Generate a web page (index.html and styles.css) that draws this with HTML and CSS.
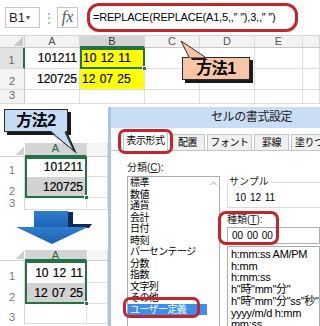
FILE: index.html
```html
<!DOCTYPE html>
<html lang="ja">
<head>
    <meta charset="UTF-8">
    <meta name="viewport" content="width=device-width, initial-scale=1.0">
    <title>REPLACE関数で数字に空白を入れる</title>
    <link rel="stylesheet" href="styles.css">
</head>
<body>
<div class="page">

    <!-- formula bar -->
    <div class="formula-bar">
        <div class="namebox">B1<span class="caret">▾</span></div>
        <div class="dots">⋮</div>
        <div class="fx">fx</div>
        <div class="formula">=REPLACE(REPLACE(A1,5,,&#8243; &#8243;),3,,&#8243; &#8243;)</div>
    </div>

    <!-- sheet -->
    <div class="sheet">
        <div class="corner"></div>
        <div class="colhead">A</div>
        <div class="colhead active">B</div>
        <div class="colhead">C</div>
        <div class="colhead">D</div>
        <div class="colhead">E</div>
        <div class="colhead"></div>

        <div class="rowhead active">1</div>
        <div class="cell num">101211</div>
        <div class="cell yellow sel">10 12 11</div>
        <div class="cell"></div>
        <div class="cell"></div>
        <div class="cell"></div>
        <div class="cell"></div>

        <div class="rowhead">2</div>
        <div class="cell num">120725</div>
        <div class="cell yellow">12 07 25</div>
        <div class="cell"></div>
        <div class="cell"></div>
        <div class="cell"></div>
        <div class="cell"></div>

        <div class="rowhead">3</div>
        <div class="cell"></div>
        <div class="cell"></div>
        <div class="cell"></div>
        <div class="cell"></div>
        <div class="cell"></div>
        <div class="cell"></div>
    </div>

    <!-- callout for method 1 -->
    <div class="callout callout-peach">
        方法1
        <svg class="tail tail-up" width="32" height="22" viewBox="0 0 32 22">
            <polygon points="5,5 13,21 29,21" fill="#1a1a1a"/>
            <polygon points="2,2 10,18.5 26,18.5" fill="#f8c6a4"/>
            <polyline points="10,18 2,2 26,18" fill="none" stroke="#2a2a2a" stroke-width="1"/>
        </svg>
    </div>

    <div class="lower">
        <div class="left-col">
            <div class="callout callout-blue">
                方法2
                <svg class="tail tail-down" width="36" height="26" viewBox="0 0 36 26">
                    <polygon points="9,3 23,3 32,23" fill="#1a1a1a"/>
                    <polygon points="6,0 20,0 29,20" fill="#c5ddf2"/>
                    <polyline points="6,1.5 29,20 20,1.5" fill="none" stroke="#2a2a2a" stroke-width="1"/>
                </svg>
            </div>

            <div class="mini mini-before">
                <div class="m-corner"></div>
                <div class="m-colhead active">A</div>
                <div class="m-colhead"></div>

                <div class="m-rowhead">1</div>
                <div class="m-cell num sel-top">101211</div>
                <div class="m-cell"></div>

                <div class="m-rowhead">2</div>
                <div class="m-cell num grey sel-bottom">120725</div>
                <div class="m-cell"></div>

                <div class="m-rowhead">3</div>
                <div class="m-cell"></div>
                <div class="m-cell"></div>
            </div>

            <svg class="arrow" width="80" height="34" viewBox="0 0 80 34">
                <defs>
                    <linearGradient id="arrowBlue" x1="0" y1="0" x2="0" y2="1">
                        <stop offset="0" stop-color="#2d7fd0"/>
                        <stop offset="1" stop-color="#1c5fae"/>
                    </linearGradient>
                </defs>
                <polygon points="56,1 61,1 61,13 80,13 77,17 56,17" fill="#0c2a55"/>
                <rect x="22" y="0" width="34" height="18" fill="url(#arrowBlue)"/>
                <polygon points="4,16 76,16 40,33" fill="url(#arrowBlue)"/>
            </svg>

            <div class="mini mini-after">
                <div class="m-corner"></div>
                <div class="m-colhead active">A</div>
                <div class="m-colhead"></div>

                <div class="m-rowhead">1</div>
                <div class="m-cell num sel-top">10 12 11</div>
                <div class="m-cell"></div>

                <div class="m-rowhead">2</div>
                <div class="m-cell num grey sel-bottom">12 07 25</div>
                <div class="m-cell"></div>

                <div class="m-rowhead">3</div>
                <div class="m-cell"></div>
                <div class="m-cell"></div>
            </div>
        </div>

        <!-- format cells dialog -->
        <div class="dialog">
            <div class="dlg-title">セルの書式設定</div>
            <div class="tabs">
                <div class="tab current ringed">表示形式</div>
                <div class="tab">配置</div>
                <div class="tab">フォント</div>
                <div class="tab">罫線</div>
                <div class="tab">塗りつぶし</div>
            </div>
            <div class="dlg-body">
                <div class="cat-col">
                    <div class="label">分類(<u>C</u>):</div>
                    <div class="listbox">
                        <ul class="cat-list">
                            <li>標準</li>
                            <li>数値</li>
                            <li>通貨</li>
                            <li>会計</li>
                            <li>日付</li>
                            <li>時刻</li>
                            <li>パーセンテージ</li>
                            <li>分数</li>
                            <li>指数</li>
                            <li>文字列</li>
                            <li>その他</li>
                            <li class="picked">ユーザー定義</li>
                        </ul>
                        <div class="scrollbar">
                            <svg width="7" height="5" viewBox="0 0 7 5"><polyline points="0.5,4 3.5,1 6.5,4" fill="none" stroke="#9a9a9a" stroke-width="1"/></svg>
                        </div>
                    </div>
                </div>
                <div class="type-col">
                    <fieldset class="sample">
                        <legend>サンプル</legend>
                        <div class="sample-value">10 12 11</div>
                    </fieldset>
                    <div class="type-field">
                        <div class="label">種類(<u>T</u>):</div>
                        <div class="type-input">00 00 00</div>
                    </div>
                    <ul class="format-list">
                        <li>h:mm:ss AM/PM</li>
                        <li>h:mm</li>
                        <li>h:mm:ss</li>
                        <li>h"時"mm"分"</li>
                        <li>h"時"mm"分"ss"秒"</li>
                        <li>yyyy/m/d h:mm</li>
                        <li>mm:ss</li>
                    </ul>
                </div>
            </div>
        </div>
    </div>

</div>
</body>
</html>
```

FILE: styles.css
```css
:root {
    --excel-green: #217346;
    --ring-red: #c4252c;
    --grid-line: #dedede;
    --head-bg: #f3f3f3;
    --head-active: #d4d4d4;
    --list-border: #abadb3;
}

*, *::before, *::after {
    box-sizing: border-box;
    margin: 0;
    padding: 0;
}

body {
    font-family: "Liberation Sans", "Noto Sans CJK JP", sans-serif;
    color: #000;
    background: #fff;
}

.page {
    position: relative;
    width: 320px;
    height: 326px;
    overflow: hidden;
}

/* formula bar */
.formula-bar {
    display: flex;
    align-items: center;
    height: 36px;
    border-bottom: 1px solid #d4d4d4;
}

.namebox {
    margin-left: 5px;
    width: 35px;
    height: 21px;
    border: 1px solid #c6c6c6;
    padding-left: 3px;
    font-size: 13px;
    line-height: 19px;
    color: #222;
}

.namebox .caret {
    font-size: 8px;
    color: #555;
    margin-left: 1px;
    vertical-align: 2px;
}

.dots {
    width: 17px;
    text-align: center;
    font-size: 12px;
    color: #9a9a9a;
}

.fx {
    width: 21px;
    height: 21px;
    border: 1px solid #c6c6c6;
    text-align: center;
    font-family: "Liberation Serif", serif;
    font-style: italic;
    font-size: 16px;
    line-height: 17px;
    color: #555;
}

.formula {
    margin-left: 9px;
    width: 211px;
    height: 29px;
    border: 3px solid var(--ring-red);
    border-radius: 12px;
    padding-left: 3px;
    font-size: 11px;
    line-height: 23px;
    letter-spacing: -0.2px;
    white-space: nowrap;
}

/* worksheet */
.sheet {
    display: grid;
    grid-template-columns: 25px 55px 65px 55px 55px 48px 1fr;
    grid-template-rows: 12px 21px 21px 14px;
}

.corner {
    background: var(--head-bg) linear-gradient(to top left, #cacaca 50%, transparent 50%) no-repeat right 1px bottom 1px / 9px 9px;
    border-right: 1px solid #d0d0d0;
    border-bottom: 1px solid #c8c8c8;
}

.colhead {
    background: var(--head-bg);
    border-right: 1px solid #d9d9d9;
    border-bottom: 1px solid #c8c8c8;
    text-align: center;
    font-size: 11px;
    line-height: 11px;
    color: #555;
}

.colhead.active {
    background: var(--head-active);
    border-bottom: 2px solid var(--excel-green);
    color: #333;
}

.rowhead {
    display: flex;
    align-items: flex-end;
    justify-content: center;
    padding-bottom: 2px;
    background: var(--head-bg);
    border-right: 1px solid #c8c8c8;
    border-bottom: 1px solid #dadada;
    font-size: 11px;
    color: #666;
    overflow: hidden;
}

.rowhead.active {
    background: #e2e2e2;
    border-right: 2px solid var(--excel-green);
}

.cell {
    display: flex;
    align-items: flex-end;
    padding: 0 2px 3px;
    border-right: 1px solid var(--grid-line);
    border-bottom: 1px solid var(--grid-line);
    font-size: 12px;
    line-height: 14px;
    word-spacing: 1px;
    white-space: nowrap;
    -webkit-text-stroke: 0.2px #000;
}

.cell.num {
    justify-content: flex-end;
}

.cell.yellow {
    background: #ffff00;
}

.cell.sel {
    position: relative;
    border: 2px solid var(--excel-green);
    padding: 0 1px 2px;
}

.cell.sel::after {
    content: "";
    position: absolute;
    right: -4px;
    bottom: -4px;
    width: 5px;
    height: 5px;
    background: var(--excel-green);
    border: 1px solid #fff;
}

/* callouts */
.callout {
    position: relative;
    height: 23px;
    border: 1px solid #2a2a2a;
    box-shadow: 3px 3px 0 #1a1a1a;
    font-weight: bold;
    font-size: 16px;
    line-height: 21px;
    text-align: center;
    letter-spacing: -0.5px;
    white-space: nowrap;
}

.callout-peach {
    position: absolute;
    left: 182px;
    top: 57px;
    width: 68px;
    background: #f8c6a4;
}

.callout-blue {
    margin: 5px 0 0 4px;
    width: 64px;
    background: #c5ddf2;
}

.tail {
    position: absolute;
    overflow: visible;
}

.tail-up {
    left: -4px;
    top: -19px;
}

.tail-down {
    left: 40px;
    top: 21px;
}

/* lower area */
.lower {
    display: flex;
}

.left-col {
    width: 108px;
    flex-shrink: 0;
}

/* small sheet snapshots */
.mini {
    display: grid;
    grid-template-columns: 25px 62px 1fr;
}

.mini-before {
    margin-top: 11px;
    grid-template-rows: 14px 20px 21px 12px;
}

.mini-after {
    margin-top: 5px;
    grid-template-rows: 11px 22px 21px 20px;
}

.m-corner {
    background: #fff linear-gradient(to top left, #d0d0d0 50%, transparent 50%) no-repeat right 1px bottom 1px / 8px 8px;
    border-bottom: 1px solid #d0d0d0;
}

.m-colhead {
    background: #f6f6f6;
    border-right: 1px solid #dcdcdc;
    border-bottom: 1px solid #d0d0d0;
    text-align: center;
    font-size: 11px;
    line-height: 11px;
    color: #555;
}

.m-colhead.active {
    background: var(--head-active);
    border-bottom: 2px solid var(--excel-green);
    color: #2f5f46;
}

.mini-after .m-colhead {
    line-height: 10px;
}

.m-rowhead {
    display: flex;
    align-items: flex-end;
    justify-content: center;
    padding-bottom: 1px;
    border-right: 1px solid #d6d6d6;
    font-size: 11px;
    color: #777;
    overflow: hidden;
}

.m-cell {
    display: flex;
    align-items: flex-end;
    padding: 0 3px 3px;
    border-right: 1px solid var(--grid-line);
    border-bottom: 1px solid var(--grid-line);
    font-size: 12px;
    line-height: 14px;
    word-spacing: 1px;
    white-space: nowrap;
    -webkit-text-stroke: 0.2px #000;
}

.m-cell.num {
    justify-content: flex-end;
}

.m-cell.grey {
    background: #d2d2d2;
}

.m-cell.sel-top {
    border: 2px solid var(--excel-green);
    border-bottom: none;
    padding: 0 2px 3px;
}

.m-cell.sel-bottom {
    position: relative;
    border: 2px solid var(--excel-green);
    border-top: none;
    padding: 0 2px 2px;
}

.m-cell.sel-bottom::after {
    content: "";
    position: absolute;
    right: -4px;
    bottom: -4px;
    width: 5px;
    height: 5px;
    background: var(--excel-green);
    border: 1px solid #fff;
}

.arrow {
    display: block;
    margin: 1px 0 0 12px;
}

/* format cells dialog */
.dialog {
    flex: 1;
    margin-top: 3px;
    height: 222px;
    border-left: 3px solid #aac6e6;
    background: #fff;
    overflow: hidden;
}

.dlg-title {
    height: 21px;
    padding-left: 100px;
    background: #c9def4;
    font-size: 12px;
    line-height: 20px;
    letter-spacing: -0.4px;
    color: #222;
    white-space: nowrap;
}

.tabs {
    display: flex;
    align-items: flex-end;
    height: 23px;
    padding-left: 12px;
    border-bottom: 1px solid #c5c5c5;
}

.tab {
    flex-shrink: 0;
    width: 35px;
    height: 16px;
    margin-right: 2px;
    background: #f0f0f0;
    border: 1px solid #c5c5c5;
    border-bottom: none;
    text-align: center;
    font-size: 10px;
    line-height: 15px;
    letter-spacing: -0.4px;
    white-space: nowrap;
    overflow: hidden;
}

.tab:nth-child(1),
.tab:nth-child(3) {
    width: 45px;
}

.tab:nth-child(5) {
    width: 42px;
    text-align: left;
    padding-left: 3px;
}

.tab.current {
    height: 20px;
    margin-bottom: -1px;
    background: #fff;
    line-height: 18px;
    overflow: visible;
}

.ringed {
    position: relative;
}

.ringed::after {
    content: "";
    position: absolute;
    left: -6px;
    right: -6px;
    top: -3px;
    bottom: -3px;
    border: 3px solid var(--ring-red);
    border-radius: 7px;
}

.dlg-body {
    display: flex;
    gap: 7px;
    padding-left: 16px;
}

.label {
    font-size: 10px;
    line-height: 12px;
    color: #222;
    white-space: nowrap;
}

.cat-col {
    width: 93px;
    flex-shrink: 0;
}

.cat-col .label {
    margin-top: 11px;
}

.listbox {
    display: flex;
    margin-top: 2px;
    height: 160px;
    border: 1px solid var(--list-border);
}

.cat-list {
    flex: 1;
    list-style: none;
}

.cat-list li {
    height: 11.5px;
    padding-left: 2px;
    font-size: 10px;
    line-height: 11.5px;
    letter-spacing: -0.6px;
    white-space: nowrap;
}

.cat-list li.picked {
    position: relative;
    background: #3d8fe9;
    color: #fff;
}

.cat-list li.picked::after {
    content: "";
    position: absolute;
    left: -5px;
    right: 7px;
    top: -7px;
    bottom: -3px;
    border: 3px solid var(--ring-red);
    border-radius: 7px;
}

.scrollbar {
    width: 12px;
    display: flex;
    justify-content: center;
    padding-top: 4px;
}

.type-col {
    flex: 1;
    min-width: 0;
}

.sample {
    margin-top: 25px;
    border: 1px solid #d3dbe2;
    border-right: none;
    padding: 4px 0 3px 0;
    min-inline-size: 0;
}

.sample legend {
    padding: 0 2px 0 1px;
    font-size: 10px;
    line-height: 12px;
    color: #222;
}

.sample-value {
    padding-left: 7px;
    font-size: 10px;
    line-height: 12px;
    word-spacing: 1px;
}

.type-field {
    position: relative;
    margin-top: 6px;
}

.type-field::after {
    content: "";
    position: absolute;
    left: -9px;
    top: -3px;
    width: 61px;
    height: 34px;
    border: 3px solid var(--ring-red);
    border-radius: 8px;
}

.type-input {
    margin-top: 1px;
    height: 17px;
    border: 1px solid var(--list-border);
    padding-left: 4px;
    font-size: 10px;
    line-height: 15px;
    word-spacing: 1px;
}

.format-list {
    margin-top: 2px;
    height: 90px;
    border: 1px solid var(--list-border);
    padding: 2px 0 0 3px;
    list-style: none;
}

.format-list li {
    font-size: 11px;
    line-height: 11.7px;
    letter-spacing: -0.3px;
    white-space: nowrap;
}
```
